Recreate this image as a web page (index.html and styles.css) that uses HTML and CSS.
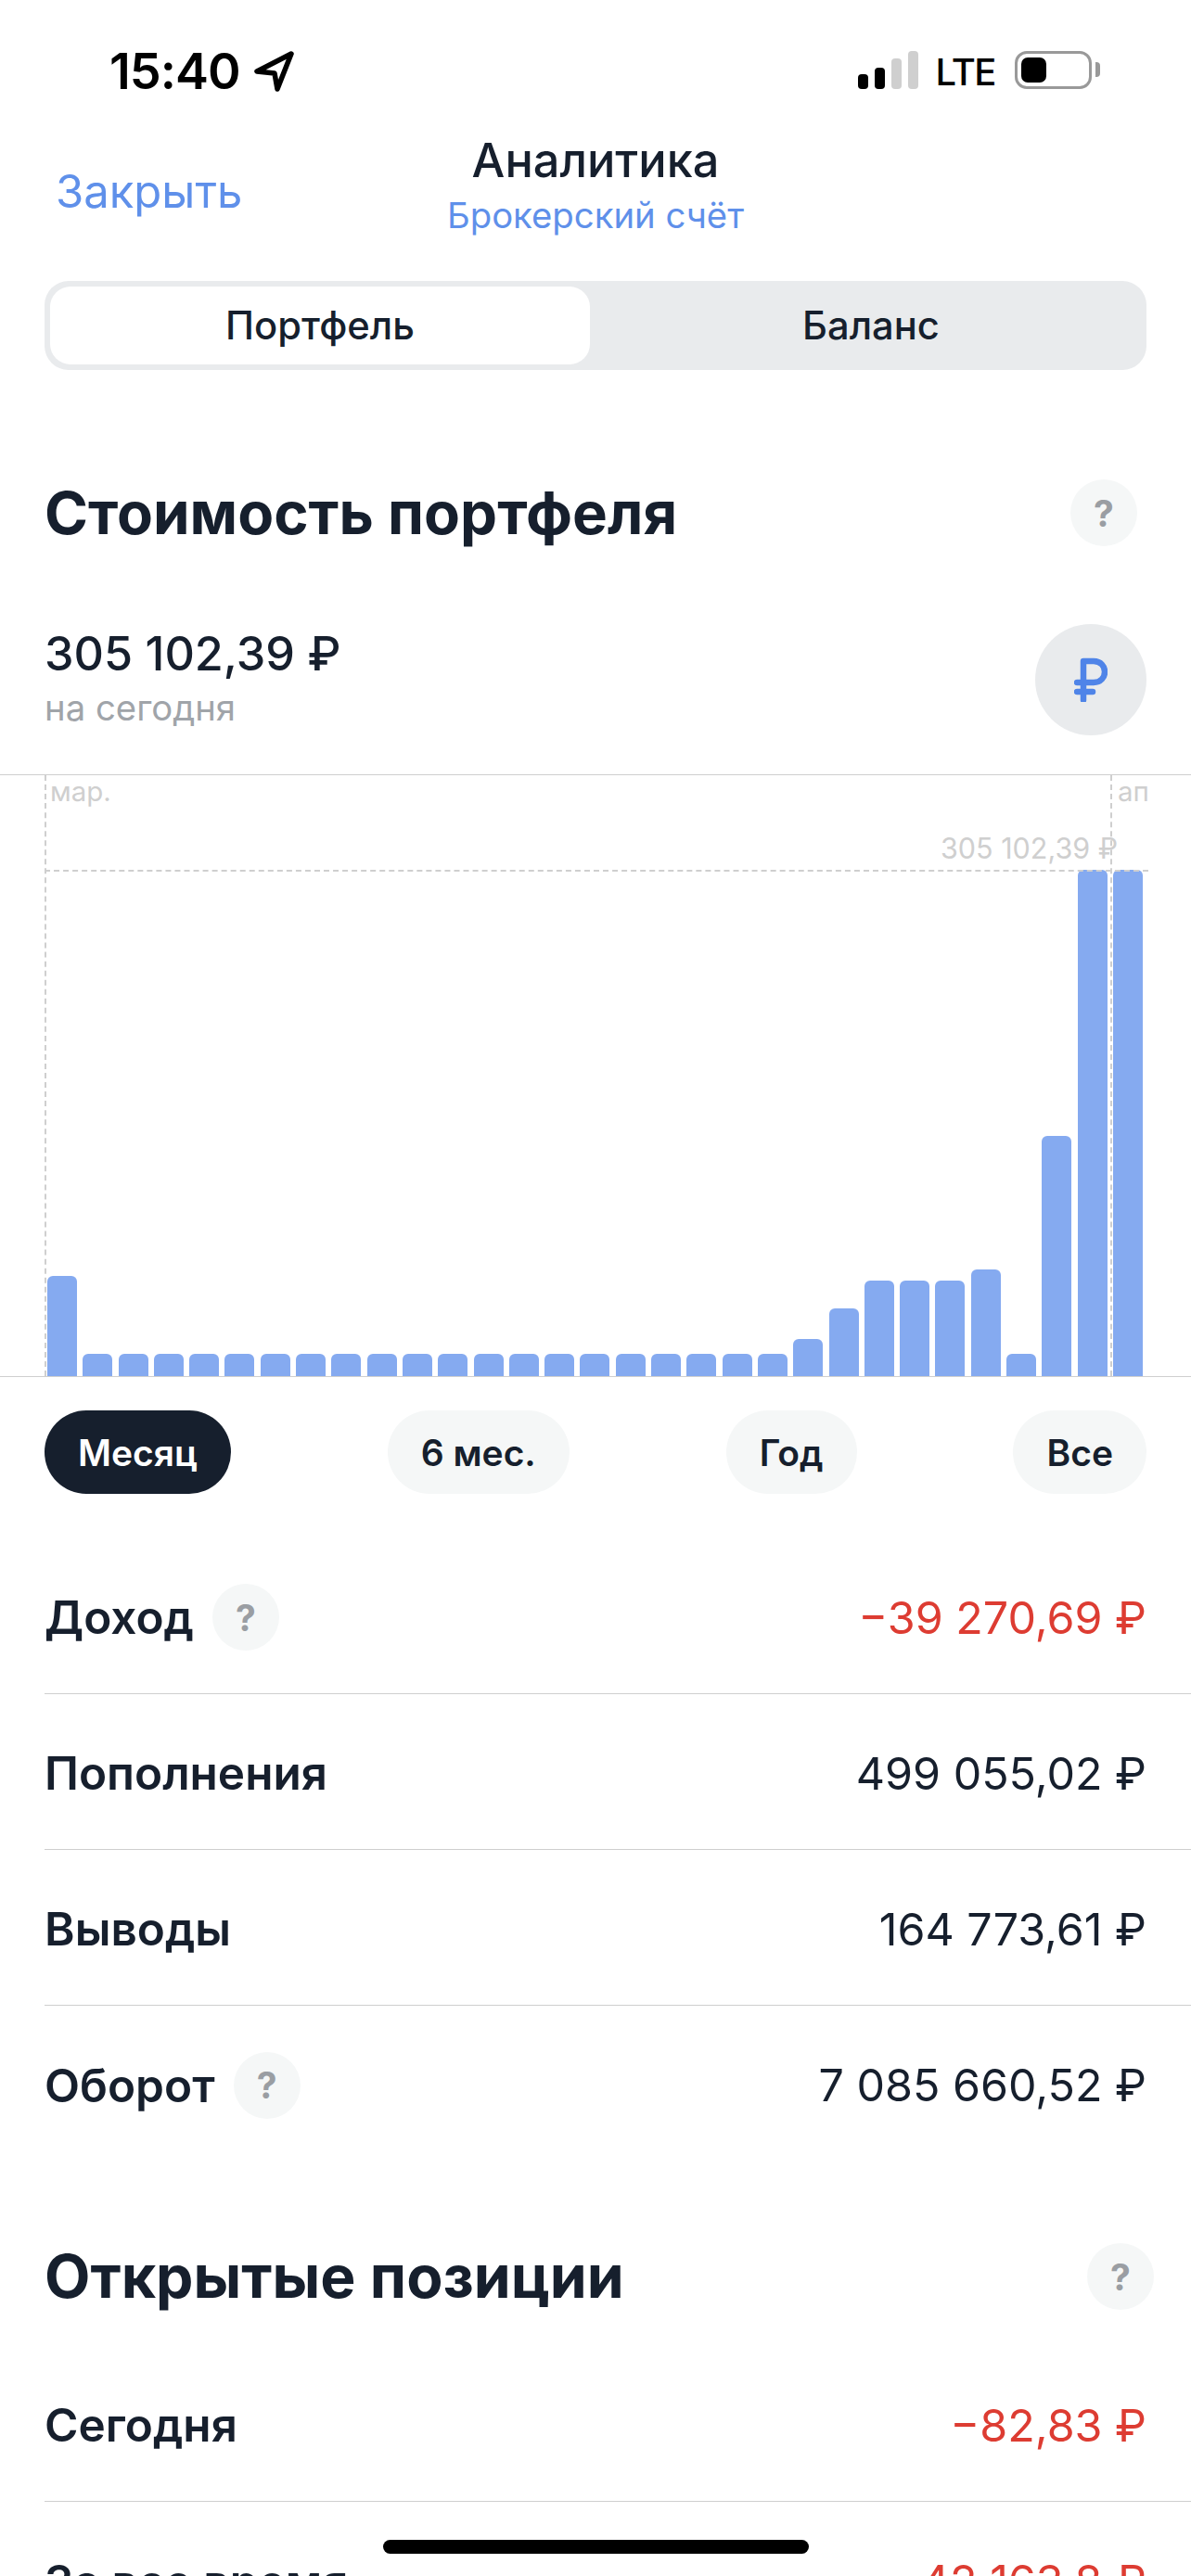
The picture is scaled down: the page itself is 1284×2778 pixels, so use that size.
FILE: index.html
```html
<!DOCTYPE html>
<html lang="ru">
<head>
    <meta charset="UTF-8">
    <meta name="viewport" content="width=device-width, initial-scale=1.0">
    <title>Аналитика</title>
    <link rel="stylesheet" href="styles.css">
</head>
<body>
    <div class="screen">
        <div class="status-bar">
            <div class="status-left">
                <span class="time">15:40</span>
                <svg class="location" viewBox="0 0 44 44" width="44" height="44">
                    <path d="M40 3 L3 22 L22 24 L25 41 Z" fill="none" stroke="#000" stroke-width="5.5" stroke-linejoin="round"/>
                </svg>
            </div>
            <div class="status-right">
                <div class="signal">
                    <span class="sig sig-1"></span>
                    <span class="sig sig-2"></span>
                    <span class="sig sig-3"></span>
                    <span class="sig sig-4"></span>
                </div>
                <span class="lte">LTE</span>
                <div class="battery"><span class="battery-fill"></span></div>
                <span class="battery-nub"></span>
            </div>
        </div>

        <div class="nav">
            <a class="nav-close">Закрыть</a>
            <div class="nav-title">
                <div class="nav-main">Аналитика</div>
                <div class="nav-sub">Брокерский счёт</div>
            </div>
        </div>

        <div class="segment">
            <div class="segment-item active">Портфель</div>
            <div class="segment-item">Баланс</div>
        </div>

        <div class="section-head head-value">
            <h2>Стоимость портфеля</h2>
            <span class="help">?</span>
        </div>

        <div class="value-row">
            <div class="value-text">
                <div class="value-num">305 102,39 ₽</div>
                <div class="value-sub">на сегодня</div>
            </div>
            <div class="currency">
                <svg viewBox="0 0 36 48" width="36" height="48">
                    <path d="M10 46 V4 H21 C37 4 37 27 21 27 H3 M3 37 H20" fill="none" stroke="#4f84e8" stroke-width="6.5" stroke-linecap="round" stroke-linejoin="round"/>
                </svg>
            </div>
        </div>

        <div class="chart">
            <div class="bars">
                <div class="bar" style="height:108px"></div>
                <div class="bar" style="height:24px"></div>
                <div class="bar" style="height:24px"></div>
                <div class="bar" style="height:24px"></div>
                <div class="bar" style="height:24px"></div>
                <div class="bar" style="height:24px"></div>
                <div class="bar" style="height:24px"></div>
                <div class="bar" style="height:24px"></div>
                <div class="bar" style="height:24px"></div>
                <div class="bar" style="height:24px"></div>
                <div class="bar" style="height:24px"></div>
                <div class="bar" style="height:24px"></div>
                <div class="bar" style="height:24px"></div>
                <div class="bar" style="height:24px"></div>
                <div class="bar" style="height:24px"></div>
                <div class="bar" style="height:24px"></div>
                <div class="bar" style="height:24px"></div>
                <div class="bar" style="height:24px"></div>
                <div class="bar" style="height:24px"></div>
                <div class="bar" style="height:24px"></div>
                <div class="bar" style="height:24px"></div>
                <div class="bar" style="height:40px"></div>
                <div class="bar" style="height:73px"></div>
                <div class="bar" style="height:103px"></div>
                <div class="bar" style="height:103px"></div>
                <div class="bar" style="height:103px"></div>
                <div class="bar" style="height:115px"></div>
                <div class="bar" style="height:24px"></div>
                <div class="bar" style="height:259px"></div>
                <div class="bar" style="height:546px"></div>
                <div class="bar" style="height:546px"></div>
            </div>
            <div class="guide guide-left"></div>
            <div class="guide guide-right"></div>
            <div class="guide-h"></div>
            <span class="month month-left">мар.</span>
            <span class="month month-right">ап</span>
            <span class="chart-value">305 102,39 ₽</span>
        </div>

        <div class="periods">
            <div class="pill active">Месяц</div>
            <div class="pill">6 мес.</div>
            <div class="pill">Год</div>
            <div class="pill">Все</div>
        </div>

        <div class="rows">
            <div class="row">
                <div class="row-label">Доход <span class="help">?</span></div>
                <div class="row-value red">−39 270,69 ₽</div>
            </div>
            <div class="row">
                <div class="row-label">Пополнения</div>
                <div class="row-value">499 055,02 ₽</div>
            </div>
            <div class="row">
                <div class="row-label">Выводы</div>
                <div class="row-value">164 773,61 ₽</div>
            </div>
            <div class="row no-line">
                <div class="row-label">Оборот <span class="help">?</span></div>
                <div class="row-value">7 085 660,52 ₽</div>
            </div>
        </div>

        <div class="section-head head-open">
            <h2>Открытые позиции</h2>
            <span class="help">?</span>
        </div>

        <div class="rows rows-open">
            <div class="row">
                <div class="row-label">Сегодня</div>
                <div class="row-value red">−82,83 ₽</div>
            </div>
            <div class="row no-line">
                <div class="row-label">За все время</div>
                <div class="row-value red">−42 163,8 ₽</div>
            </div>
        </div>

        <div class="home-bar"></div>
    </div>
</body>
</html>
```

FILE: styles.css
```css
body {
    margin: 0;
    background-color: #fff;
    font-family: 'Inter', 'Noto Sans', sans-serif;
    color: #161f2d;
}

.screen {
    position: relative;
    width: 1284px;
    height: 2778px;
    overflow: hidden;
}

/* status bar */
.status-bar {
    height: 140px;
    padding: 0 98px 0 118px;
    display: flex;
    justify-content: space-between;
    align-items: flex-start;
    box-sizing: border-box;
}

.status-left {
    display: flex;
    align-items: center;
    margin-top: 46px;
    gap: 15px;
}

.time {
    font-size: 54px;
    line-height: 62px;
    font-weight: 600;
    color: #000;
    letter-spacing: -1px;
}

.status-right {
    display: flex;
    align-items: flex-end;
    margin-top: 55px;
    height: 41px;
}

.signal {
    display: flex;
    align-items: flex-end;
    gap: 7px;
}

.sig {
    width: 11px;
    border-radius: 4px;
    background-color: #000;
}

.sig-1 { height: 16px; }
.sig-2 { height: 23px; }
.sig-3 { height: 33px; background-color: #cfcfcf; }
.sig-4 { height: 41px; background-color: #cfcfcf; }

.lte {
    margin-left: 18px;
    font-size: 40px;
    line-height: 37px;
    font-weight: 500;
    color: #000;
    letter-spacing: -1.5px;
}

.battery {
    width: 83px;
    height: 41px;
    margin-left: 21px;
    border: 3px solid #999;
    border-radius: 13px;
    box-sizing: border-box;
    padding: 4px;
}

.battery-fill {
    display: block;
    width: 27px;
    height: 100%;
    background-color: #000;
    border-radius: 7px;
}

.battery-nub {
    width: 5px;
    height: 16px;
    margin: 0 0 13px 4px;
    background-color: #999;
    border-radius: 0 4px 4px 0;
}

/* nav */
.nav {
    position: relative;
    height: 130px;
    display: flex;
    justify-content: center;
}

.nav-close {
    position: absolute;
    left: 60px;
    top: 36px;
    font-size: 49px;
    line-height: 62px;
    color: #5f90ea;
}

.nav-main {
    margin-top: 2px;
    font-size: 50.5px;
    line-height: 62px;
    font-weight: 500;
    text-align: center;
}

.nav-sub {
    font-size: 38.3px;
    line-height: 46px;
    color: #5f90ea;
    text-align: center;
    margin-top: 5px;
}

/* segment */
.segment {
    margin: 33px 48px 0;
    height: 96px;
    padding: 6px;
    box-sizing: border-box;
    display: flex;
    background-color: #e9ebed;
    border-radius: 26px;
}

.segment-item {
    flex: 1;
    padding-left: 12px;
    display: flex;
    align-items: center;
    justify-content: center;
    font-size: 41.7px;
    font-weight: 500;
    border-radius: 22px;
}

.segment-item.active {
    flex: none;
    width: 582px;
    padding-left: 0;
    background-color: #fff;
}

/* section heading */
.section-head {
    display: flex;
    align-items: center;
    justify-content: space-between;
    margin-left: 48px;
}

.section-head h2 {
    margin: 0;
    font-size: 63.6px;
    line-height: 72px;
    font-weight: 700;
}

.head-value {
    margin-top: 118px;
    margin-right: 58px;
}

.head-open {
    margin-top: 88px;
    margin-right: 40px;
}

.head-open h2 {
    font-size: 64.2px;
}

.help {
    display: inline-flex;
    align-items: center;
    justify-content: center;
    width: 72px;
    height: 72px;
    border-radius: 50%;
    background-color: #f5f7f7;
    color: #9a9ea3;
    font-size: 39px;
    font-weight: 700;
}

/* value */
.value-row {
    margin: 84px 48px 0;
    display: flex;
    justify-content: space-between;
    align-items: center;
}

.value-text {
    margin-bottom: 6px;
}

.value-num {
    font-size: 50.3px;
    line-height: 60px;
    font-weight: 500;
}

.value-sub {
    margin-top: 6px;
    font-size: 38.3px;
    line-height: 44px;
    color: #a0a4a9;
}

.currency {
    width: 120px;
    height: 120px;
    border-radius: 50%;
    background-color: #e9ebed;
    display: flex;
    align-items: center;
    justify-content: center;
}

/* chart */
.chart {
    position: relative;
    height: 650px;
    margin-top: 42px;
    border-top: 1px solid #cfcfcf;
    border-bottom: 1px solid #cfcfcf;
    box-sizing: border-box;
    overflow: hidden;
}

.bars {
    height: 100%;
    padding-left: 51px;
    display: flex;
    align-items: flex-end;
    gap: 6.3px;
}

.bar {
    width: 32px;
    background-color: #85aaf0;
    border-radius: 6px 6px 0 0;
}

.guide {
    position: absolute;
    top: 0;
    bottom: 0;
    border-left: 2px dashed #cfcfcf;
}

.guide-left { left: 48px; }
.guide-right { left: 1197px; }

.guide-h {
    position: absolute;
    top: 102px;
    left: 48px;
    width: 1190px;
    border-top: 2px dashed #cfcfcf;
}

.month {
    position: absolute;
    top: 0;
    font-size: 29.5px;
    line-height: 34px;
    color: #cfcfcf;
}

.month-left { left: 54px; }
.month-right { left: 1205px; }

.chart-value {
    position: absolute;
    top: 61px;
    left: 1014px;
    font-size: 30.5px;
    line-height: 36px;
    color: #cfcfcf;
}

/* periods */
.periods {
    margin: 36px 48px 0;
    display: flex;
    justify-content: space-between;
}

.pill {
    height: 90px;
    padding: 0 36px;
    display: flex;
    align-items: center;
    border-radius: 45px;
    background-color: #f5f7f7;
    font-size: 39px;
    font-weight: 600;
}

.pill.active {
    background-color: #161f2d;
    color: #fff;
}

/* rows */
.rows {
    margin-top: 48px;
    margin-left: 48px;
}

.rows-open {
    margin-top: 39px;
}

.row {
    height: 168px;
    padding: 3px 48px 0 0;
    box-sizing: border-box;
    display: flex;
    align-items: center;
    justify-content: space-between;
    border-bottom: 1px solid #cfcfcf;
}

.row.no-line {
    border-bottom: none;
}

.row-label {
    display: flex;
    align-items: center;
    gap: 20px;
    font-size: 49.5px;
    font-weight: 600;
}

.row-value {
    font-size: 48.4px;
}

.red {
    color: #dd3c32;
}

.home-bar {
    position: absolute;
    left: 413px;
    top: 2739px;
    width: 459px;
    height: 15px;
    border-radius: 8px;
    background-color: #000;
}
```
